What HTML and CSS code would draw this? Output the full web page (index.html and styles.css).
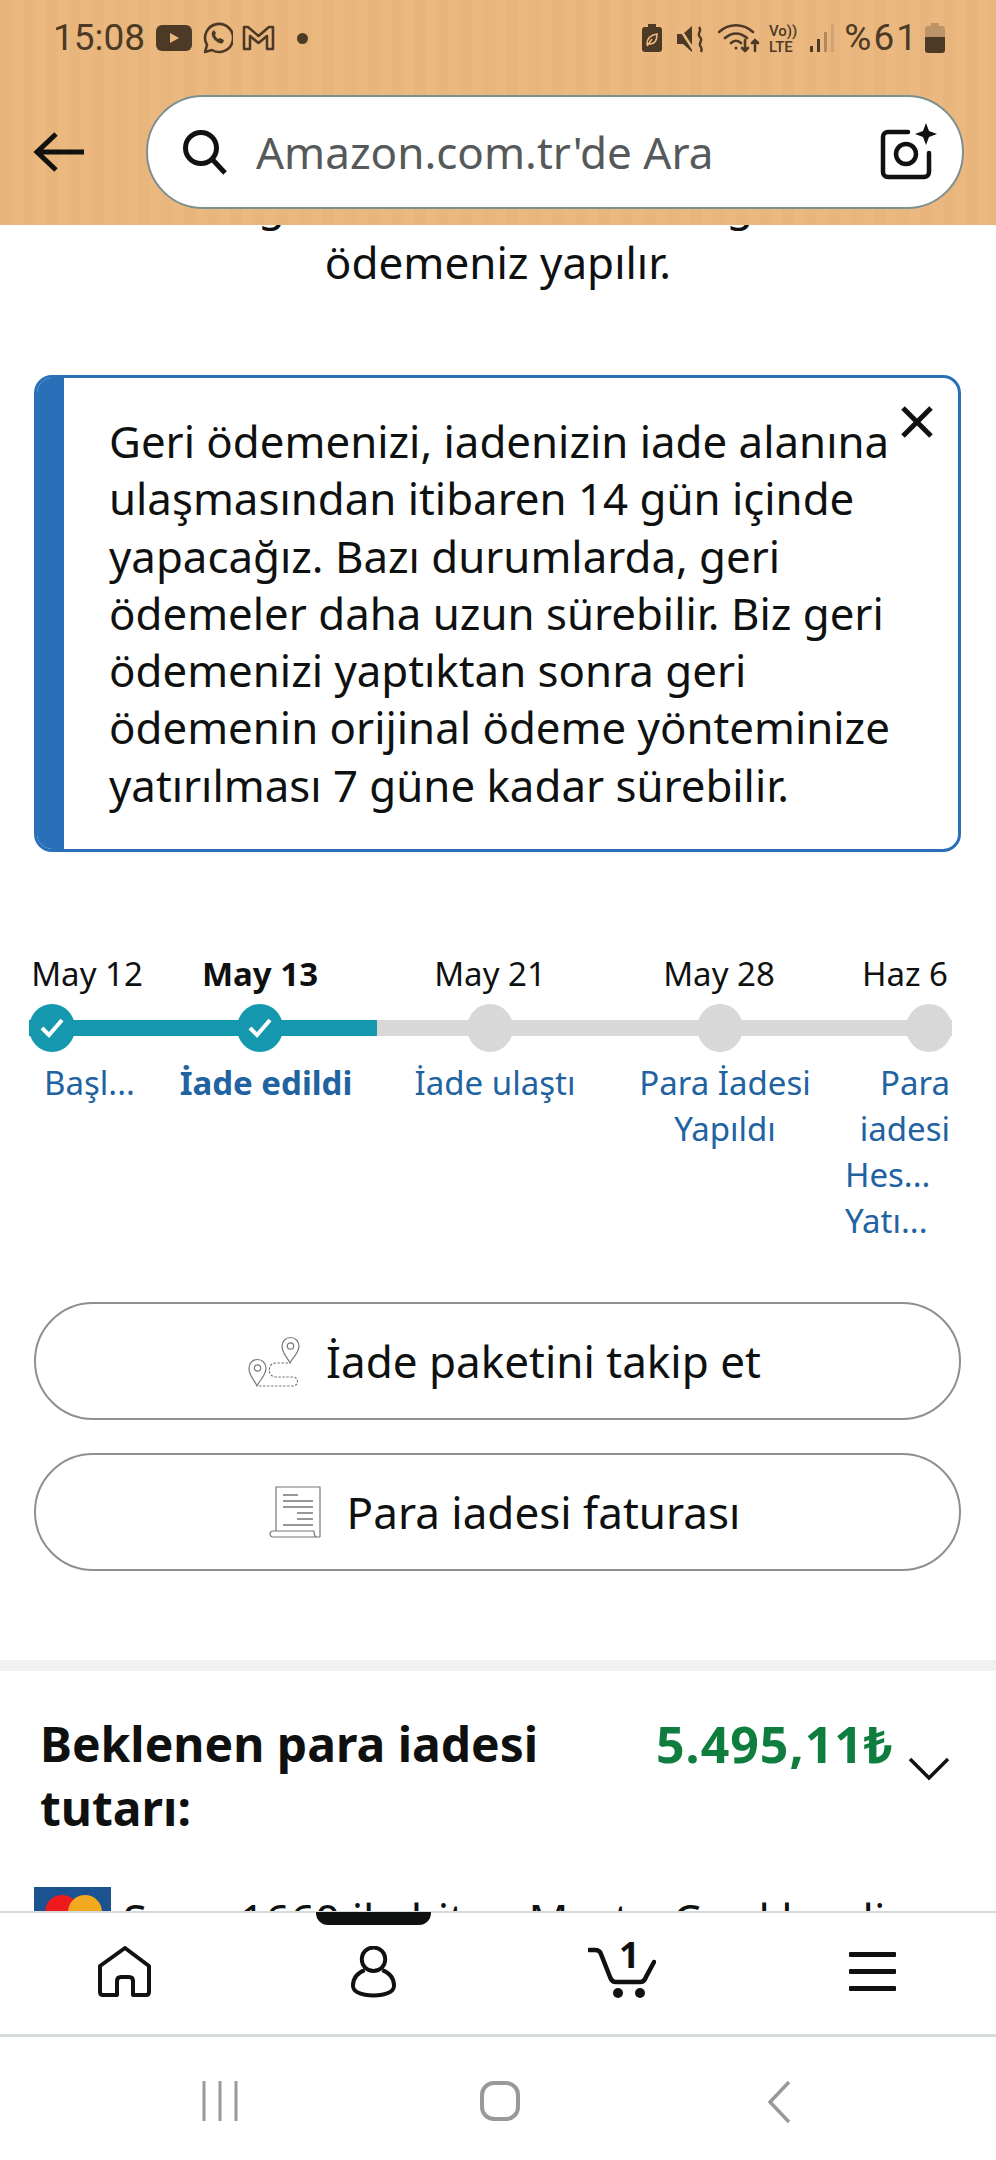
FILE: index.html
```html
<!DOCTYPE html>
<html lang="tr">
<head>
    <meta charset="UTF-8">
    <meta name="viewport" content="width=device-width, initial-scale=1.0">
    <title>Amazon.com.tr - İade</title>
    <link rel="stylesheet" href="styles.css">
</head>
<body>

    <!-- Durum çubuğu ve arama -->
    <div class="top">
        <div class="status">
            <div class="status-left">
                <span class="clock">15:08</span>
                <svg class="st-yt" viewBox="0 0 36 26"><rect width="36" height="26" rx="6" fill="#4d3a26"/><path d="M14 8l9 5-9 5z" fill="#ebb97f"/></svg>
                <svg class="st-wa" viewBox="0 0 32 32" fill="none" stroke="#4d3a26" stroke-width="2.6"><path d="M4 30l2-7a14 14 0 1 1 5 5z" stroke-linejoin="round"/><path d="M11 10c-1 3 1 7 4 9 2 2 5 3 7 2l1-3-4-2-2 1c-1-1-2-2-3-4l1-2-2-3z" fill="#4d3a26" stroke="none"/></svg>
                <svg class="st-m" viewBox="0 0 33 26" fill="none" stroke="#4d3a26" stroke-width="2.6" stroke-linejoin="round"><path d="M2 2h4l10.500 9L27 2h4v22h-6V11l-8.500 7L8 11v13H2z"/></svg>
                <span class="st-dot"></span>
            </div>
            <div class="status-right">
                <svg class="st-bat" viewBox="0 0 20 28"><path d="M6 0h8v3h3a3 3 0 0 1 3 3v19a3 3 0 0 1-3 3H3a3 3 0 0 1-3-3V6a3 3 0 0 1 3-3h3z" fill="#4d3a26"/><path d="M5 20c0-6 4-9 10-10 0 6-2 10-7 10zM5 22l5-7" fill="none" stroke="#ebb97f" stroke-width="1.600"/></svg>
                <svg class="st-mute" viewBox="0 0 28 30"><path d="M0 10h6l9-8v26l-9-8H0z" fill="#4d3a26"/><path d="M1 2l17 26" stroke="#ebb97f" stroke-width="2.500"/><path d="M22 3c4 4-3 6 1 10s-3 6 1 10c1 2 1 3 0 5" fill="none" stroke="#4d3a26" stroke-width="2.400"/></svg>
                <svg class="st-wifi" viewBox="0 0 42 30" fill="none" stroke="#4d3a26" stroke-width="2.600" stroke-linecap="round"><path d="M1 9c10-9 24-9 34 0M7 15c7-6 15-6 22 0M13 20c3-3 7-3 10 0"/><circle cx="18" cy="25" r="1.500" fill="#4d3a26" stroke="none"/><path d="M27 17v11m-3-3l3 3 3-3M37 28V17m-3 3l3-3 3 3"/></svg>
                <span class="st-lte"><span>Vo))</span><span>LTE</span></span>
                <svg class="st-sig" viewBox="0 0 26 28"><rect x="0" y="22" width="3" height="6" fill="#4d3a26"/><rect x="7" y="15" width="3" height="13" fill="#4d3a26"/><rect x="14" y="8" width="3" height="20" fill="#b08a5c"/><rect x="21" y="0" width="3" height="28" fill="#cfa474"/></svg>
                <span class="clock percent">%61</span>
                <svg class="st-level" viewBox="0 0 20 30"><path d="M6 0h8v3h3a3 3 0 0 1 3 3v9H0V6a3 3 0 0 1 3-3h3z" fill="#bd946a"/><path d="M0 14h20v13a3 3 0 0 1-3 3H3a3 3 0 0 1-3-3z" fill="#4d3a26"/></svg>
            </div>
        </div>
        <div class="searchbar">
            <svg class="back" viewBox="0 0 52 40" fill="none" stroke="#111" stroke-width="5"><path d="M24 2L5 20l19 18M5 20h47"/></svg>
            <div class="search">
                <svg class="lens" viewBox="0 0 46 46" fill="none" stroke="#111" stroke-width="5"><circle cx="19" cy="19" r="15.500"/><path d="M30 30l13 14"/></svg>
                <span class="search-text">Amazon.com.tr'de Ara</span>
                <svg class="cam" viewBox="0 0 58 58" fill="none" stroke="#111" stroke-width="4.500" stroke-linecap="round"><path d="M28 9H8a5 5 0 0 0-5 5v35a5 5 0 0 0 5 5h36a5 5 0 0 0 5-5V30"/><circle cx="26" cy="31" r="10"/><path d="M46 0l3 8 8 3-8 3-3 8-3-8-8-3 8-3z" fill="#111" stroke="none"/></svg>
            </div>
        </div>
    </div>

    <div class="main">
        <p class="note">İade kargonuz teslim alınırken geri iade<br>ödemeniz yapılır.</p>

        <!-- Uyarı kutusu -->
        <div class="alert">
            <div class="alert-bar"></div>
            <p class="alert-text">Geri ödemenizi, iadenizin iade alanına ulaşmasından itibaren 14 gün içinde yapacağız. Bazı durumlarda, geri ödemeler daha uzun sürebilir. Biz geri ödemenizi yaptıktan sonra geri ödemenin orijinal ödeme yönteminize yatırılması 7 güne kadar sürebilir.</p>
            <svg class="close" viewBox="0 0 32 32" fill="none" stroke="#111" stroke-width="5"><path d="M2 2l28 28M30 2L2 30"/></svg>
        </div>

        <!-- Zaman çizelgesi -->
        <div class="timeline">
            <div class="dates">
                <span>May 12</span>
                <span class="bold">May 13</span>
                <span>May 21</span>
                <span>May 28</span>
                <span>Haz 6</span>
            </div>
            <div class="track">
                <span class="dot done"><svg viewBox="0 0 24 20" fill="none" stroke="#fff" stroke-width="4"><path d="M2 10l7 7L22 2"/></svg></span>
                <span class="dot done"><svg viewBox="0 0 24 20" fill="none" stroke="#fff" stroke-width="4"><path d="M2 10l7 7L22 2"/></svg></span>
                <span class="dot"></span>
                <span class="dot"></span>
                <span class="dot"></span>
            </div>
            <div class="labels">
                <span>Başl...</span>
                <span class="bold">İade edildi</span>
                <span>İade ulaştı</span>
                <span>Para İadesi<br>Yapıldı</span>
                <span class="last"><span class="r">Para</span><span class="r">iadesi</span><span>Hes...</span><span>Yatı...</span></span>
            </div>
        </div>

        <!-- Butonlar -->
        <div class="buttons">
            <div class="btn">
                <svg class="btn-icon" viewBox="0 0 52 52" fill="none" stroke="#777" stroke-width="1.200"><path d="M42 28c-3-6-8-10-8-17a8.500 8.500 0 0 1 17 0c0 7-6 11-9 17z"/><circle cx="42.500" cy="11" r="3.200"/><path d="M9 51C6 44 1 41 1 33a8.500 8.500 0 0 1 17 0c0 8-6 11-9 18z"/><circle cx="9.500" cy="33" r="3.200"/><path d="M40 28H28c-9 0-9 14 0 14h17c6 0 6 9 0 9H11" stroke-dasharray="2.500 1.500"/></svg>
                <span>İade paketini takip et</span>
            </div>
            <div class="btn">
                <svg class="btn-icon" viewBox="0 0 52 52" fill="none" stroke="#777" stroke-width="1.200"><path d="M7 45V1h44v50"/><path d="M51 51H4c-4 0-4-6 0-6h41c0 2 0 6 3 6"/><path d="M14 9h15M14 15h30M14 21h30M28 27h16M28 33h16M14 39h30" stroke-width="1.500"/></svg>
                <span>Para iadesi faturası</span>
            </div>
        </div>

        <div class="divider"></div>

        <!-- Tutar -->
        <div class="refund">
            <div class="refund-title">Beklenen para iadesi tutarı:</div>
            <div class="refund-amount">5.495,11₺</div>
            <svg class="chevron" viewBox="0 0 42 24" fill="none" stroke="#111" stroke-width="3.500"><path d="M2 2l19 19L40 2"/></svg>
        </div>

        <div class="payment">
            <svg class="card" viewBox="0 0 77 50"><rect width="77" height="50" fill="#1b5390"/><circle cx="28" cy="25" r="17" fill="#ee1a1c"/><circle cx="51" cy="25" r="17" fill="#f3a91f"/></svg>
            <span class="payment-text">Sonu 1660 ile biten MasterCard kredi</span>
        </div>
    </div>

    <!-- Alt gezinme -->
    <div class="bottom">
        <span class="handle"></span>
        <svg class="nav-home" viewBox="0 0 53 52" fill="none" stroke="#111" stroke-width="4" stroke-linejoin="round"><path d="M2 20L27 2l24 18v26q0 3-3 3H35V35q0-4-4-4h-8q-4 0-4 4v14H5q-3 0-3-3z"/></svg>
        <svg class="nav-user" viewBox="0 0 46 52" fill="none" stroke="#111" stroke-width="4"><ellipse cx="23" cy="13" rx="12" ry="12"/><path d="M14 24C6 27 2 32 2 40c0 6 8 10 21 10s21-4 21-10c0-8-4-13-12-16"/></svg>
        <div class="nav-cart">
            <span class="cart-count">1</span>
            <svg viewBox="0 0 68 56" fill="none" stroke="#111" stroke-width="4.500" stroke-linecap="round"><path d="M1 7h6c3 0 5 1 6 4l9 23c1 3 3 5 6 5h24c3 0 5-2 6-5l8-15"/><circle cx="30" cy="50" r="5" fill="#111" stroke="none"/><circle cx="52" cy="50" r="5" fill="#111" stroke="none"/></svg>
        </div>
        <div class="nav-menu"><span></span><span></span><span></span></div>
    </div>

    <!-- Sistem çubuğu -->
    <div class="sysnav">
        <svg class="sys-recent" viewBox="0 0 36 40" fill="none" stroke="#999" stroke-width="3"><path d="M2 0v40M18 0v40M34 0v40"/></svg>
        <svg class="sys-home" viewBox="0 0 40 40" fill="none" stroke="#999" stroke-width="4"><rect x="2" y="2" width="36" height="36" rx="12"/></svg>
        <svg class="sys-back" viewBox="0 0 24 42" fill="none" stroke="#999" stroke-width="3.500"><path d="M22 1L3 21l19 20"/></svg>
    </div>

</body>
</html>
```

FILE: styles.css
```css
* {
    box-sizing: border-box;
}

body {
    font-family: "Noto Sans", sans-serif;
    margin: 0;
    width: 996px;
    height: 2160px;
    background-color: white;
    color: #0f1111;
    display: flex;
    flex-direction: column;
    overflow: hidden;
}

p {
    margin: 0;
}

/* Kopf */
.top {
    height: 225px;
    flex: none;
    background-color: #ebb97f;
    background-image: repeating-linear-gradient(90deg, #e8b67d 0 12px, #ebb97f 12px 23px);
    position: relative;
    z-index: 1;
}

.status {
    height: 95px;
    padding: 17px 51px 0 53px;
    display: flex;
    justify-content: space-between;
    color: #4d3a26;
}

.status-left,
.status-right {
    display: flex;
    align-items: flex-start;
}

.clock {
    font-family: Roboto, sans-serif;
    font-size: 37px;
    line-height: 42px;
}

.st-yt {
    width: 36px;
    height: 26px;
    margin: 8px 0 0 11px;
}

.st-wa {
    width: 32px;
    height: 32px;
    margin: 5px 0 0 9px;
}

.st-m {
    width: 33px;
    height: 26px;
    margin: 8px 0 0 9px;
}

.st-dot {
    width: 11px;
    height: 11px;
    border-radius: 50%;
    background-color: #4d3a26;
    margin: 16px 0 0 22px;
}

.st-bat {
    width: 20px;
    height: 28px;
    margin: 7px 0 0 0;
}

.st-mute {
    width: 28px;
    height: 30px;
    margin: 7px 0 0 15px;
}

.st-wifi {
    width: 42px;
    height: 30px;
    margin: 6px 0 0 13px;
}

.st-lte {
    display: flex;
    flex-direction: column;
    margin: 6px 0 0 9px;
    font-family: Roboto, sans-serif;
    font-weight: 500;
    font-size: 15px;
    line-height: 16px;
}

.st-sig {
    width: 26px;
    height: 28px;
    margin: 7px 0 0 13px;
}

.percent {
    margin-left: 8px;
    letter-spacing: 2px;
}

.st-level {
    width: 20px;
    height: 30px;
    margin: 6px 0 0 6px;
}

.searchbar {
    display: flex;
    align-items: center;
    padding-left: 32px;
}

.back {
    width: 52px;
    height: 40px;
    margin-right: 62px;
}

.search {
    width: 818px;
    height: 114px;
    background-color: white;
    border: 2px solid #7d8f8f;
    border-radius: 57px;
    display: flex;
    align-items: center;
    padding-left: 34px;
}

.lens {
    width: 46px;
    height: 46px;
}

.search-text {
    font-size: 44px;
    color: #565959;
    margin-left: 28px;
    flex: 1;
}

.cam {
    width: 58px;
    height: 58px;
    margin-right: 24px;
}

/* Inhalt */
.main {
    flex: 1;
    overflow: hidden;
    min-height: 0;
}

.note {
    font-size: 44px;
    line-height: 59px;
    text-align: center;
    margin-top: -51px;
}

.alert {
    margin: 83px 35px 0 34px;
    height: 477px;
    border: 3px solid #2a70b8;
    border-radius: 18px;
    display: flex;
    align-items: flex-start;
    overflow: hidden;
    position: relative;
}

.alert-bar {
    width: 27px;
    height: 100%;
    flex: none;
    background-color: #2a70b8;
}

.alert-text {
    font-size: 43.800px;
    line-height: 57.300px;
    margin: 35px 0 0 45px;
    width: 800px;
}

.close {
    position: absolute;
    top: 28px;
    right: 25px;
    width: 32px;
    height: 32px;
}

.timeline {
    margin-top: 99px;
}

.dates,
.labels {
    display: grid;
    text-align: center;
    padding-left: 30px;
    font-size: 33px;
}

.dates {
    grid-template-columns: 114px 232px 228px 230px 142px;
    line-height: 46px;
}

.bold {
    font-weight: 700;
}

.track {
    display: grid;
    grid-template-columns: 208px 230px 230px 209px 46px;
    align-items: center;
    width: 923px;
    height: 48px;
    margin: 7px 0 0 29px;
    background-image:
        linear-gradient(90deg, #1598ad 348px, #d8d8d8 348px);
    background-size: 100% 16px;
    background-position: 0 center;
    background-repeat: no-repeat;
}

.dot {
    width: 46px;
    height: 48px;
    border-radius: 50%;
    background-color: #d8d8d8;
    display: flex;
    align-items: center;
    justify-content: center;
}

.dot.done {
    background-color: #1598ad;
}

.dot svg {
    width: 24px;
    height: 20px;
}

.labels {
    grid-template-columns: 119px 234px 224px 236px 105px;
    line-height: 46px;
    color: #2162a1;
    margin-top: 8px;
}

.last {
    display: flex;
    flex-direction: column;
    text-align: left;
    margin-left: 2px;
    width: 105px;
}

.last .r {
    text-align: right;
}

/* Buttons */
.buttons {
    margin: 58px 35px 0 34px;
    display: flex;
    flex-direction: column;
    gap: 33px;
}

.btn {
    height: 118px;
    border: 2px solid #8d9090;
    border-radius: 59px;
    display: flex;
    align-items: center;
    justify-content: center;
    gap: 26px;
    padding-left: 14px;
    font-size: 44px;
}

.btn-icon {
    width: 52px;
    height: 52px;
}

.divider {
    height: 11px;
    margin-top: 89px;
    background-color: #f0f2f2;
}

/* Tutar */
.refund {
    display: flex;
    align-items: flex-start;
    padding: 41px 46px 0 40px;
    font-size: 48px;
    font-weight: 700;
    line-height: 64px;
}

.refund-title {
    width: 616px;
}

.refund-amount {
    color: #0f7d3e;
    white-space: nowrap;
    font-size: 50px;
    letter-spacing: 1px;
}

.chevron {
    width: 42px;
    height: 24px;
    margin: 45px 0 0 auto;
}

.payment {
    display: flex;
    align-items: flex-start;
    gap: 12px;
    padding: 47px 0 0 34px;
    font-size: 44px;
    line-height: 56px;
    white-space: nowrap;
}

.payment-text {
    margin-top: 4px;
}

.card {
    width: 77px;
    height: 50px;
    flex: none;
}

/* Alt gezinme */
.bottom {
    height: 126px;
    flex: none;
    border-top: 2px solid #d5dbdb;
    border-bottom: 3px solid #d5dbdb;
    background-color: white;
    position: relative;
}

.handle {
    position: absolute;
    top: -1px;
    left: 316px;
    width: 115px;
    height: 13px;
    background-color: #0f1111;
    border-radius: 0 0 12px 12px;
}

.nav-home,
.nav-user,
.nav-cart,
.nav-menu {
    position: absolute;
}

.nav-home {
    left: 98px;
    top: 33px;
    width: 53px;
    height: 52px;
}

.nav-user {
    left: 351px;
    top: 33px;
    width: 45px;
    height: 52px;
}

.nav-cart {
    left: 588px;
    top: 30px;
    width: 68px;
    height: 56px;
}

.nav-cart svg {
    display: block;
    width: 68px;
    height: 56px;
}

.cart-count {
    position: absolute;
    left: 31px;
    top: -7px;
    font-size: 36px;
    line-height: 38px;
    font-weight: 700;
}

.nav-menu {
    left: 849px;
    top: 39px;
    width: 47px;
    display: flex;
    flex-direction: column;
    gap: 12px;
}

.nav-menu span {
    height: 5px;
    border-radius: 1px;
    background-color: #0f1111;
}

/* Sistem çubuğu */
.sysnav {
    height: 123px;
    flex: none;
    position: relative;
}

.sysnav svg {
    position: absolute;
    top: 44px;
}

.sys-recent {
    left: 202px;
    width: 36px;
    height: 40px;
}

.sys-home {
    left: 480px;
    width: 40px;
    height: 40px;
}

.sys-back {
    left: 767px;
    width: 24px;
    height: 42px;
}
```
